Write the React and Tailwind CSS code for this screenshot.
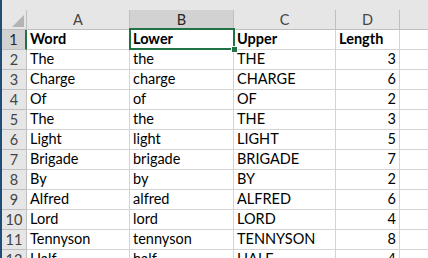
const rows = [
  ['Word', 'Lower', 'Upper', 'Length'],
  ['The', 'the', 'THE', '3'],
  ['Charge', 'charge', 'CHARGE', '6'],
  ['Of', 'of', 'OF', '2'],
  ['The', 'the', 'THE', '3'],
  ['Light', 'light', 'LIGHT', '5'],
  ['Brigade', 'brigade', 'BRIGADE', '7'],
  ['By', 'by', 'BY', '2'],
  ['Alfred', 'alfred', 'ALFRED', '6'],
  ['Lord', 'lord', 'LORD', '4'],
  ['Tennyson', 'tennyson', 'TENNYSON', '8'],
  ['Half', 'half', 'HALF', '4'],
]

const cols = ['A', 'B', 'C', 'D']

export default function App() {
  return (
    <div className="relative w-[428px] h-[258px] overflow-hidden bg-white font-['Lato','Liberation_Sans',sans-serif] text-[14.5px]">
      <div className="flex items-start">
        <div className="w-[2px] h-[258px] shrink-0 bg-[#1e4e78]" />
        <div className="flex-1">
          <div className="h-[10px] bg-[#e6e6e6]" />
          <div className="grid grid-cols-[25px_103px_104px_102px_64px_1fr] auto-rows-[20px]">
            <div className="relative bg-[#e6e6e6] border-r border-b border-[#bfbfbf]">
              <div className="absolute right-[2px] bottom-[2px] w-0 h-0 border-l-[12px] border-l-transparent border-b-[12px] border-b-[#b4b4b4]" />
            </div>
            {cols.map((c) => (
              <div
                key={c}
                className={
                  c === 'B'
                    ? 'flex items-center justify-center bg-[#d2d2d2] border-r border-b border-[#bfbfbf] text-[#262626]'
                    : 'flex items-center justify-center bg-[#e6e6e6] border-r border-b border-[#bfbfbf] text-[#444]'
                }
              >
                {c}
              </div>
            ))}
            <div className="bg-[#e6e6e6] border-b border-[#bfbfbf]" />

            {rows.map((r, i) => (
              <Row key={i} n={i + 1} cells={r} />
            ))}
          </div>
        </div>
      </div>

      {/* selection of B1 */}
      <div className="absolute left-[129px] top-[28px] w-[106px] h-[22px] border-2 border-[#217346]" />
      <div className="absolute left-[231px] top-[46px] w-[7px] h-[7px] bg-[#217346] border border-white" />
    </div>
  )
}

function Row({ n, cells }) {
  const head = n === 1
  return (
    <>
      <div
        className={
          head
            ? 'flex items-center justify-center bg-[#d2d2d2] border-r-2 border-r-[#217346] border-b border-b-[#bfbfbf] text-[#262626]'
            : 'flex items-center justify-center bg-[#e6e6e6] border-r border-b border-[#bfbfbf] text-[#444]'
        }
      >
        {n}
      </div>
      {cells.map((v, j) => (
        <div
          key={j}
          className={
            'flex items-end pb-[1px] border-r border-b border-[#d4d4d4] text-black leading-[18px] whitespace-nowrap px-[3px] ' +
            (head ? 'font-bold ' : '') +
            (j === 3 && !head ? 'justify-end' : '')
          }
        >
          {v}
        </div>
      ))}
      <div className="border-b border-[#d4d4d4]" />
    </>
  )
}
